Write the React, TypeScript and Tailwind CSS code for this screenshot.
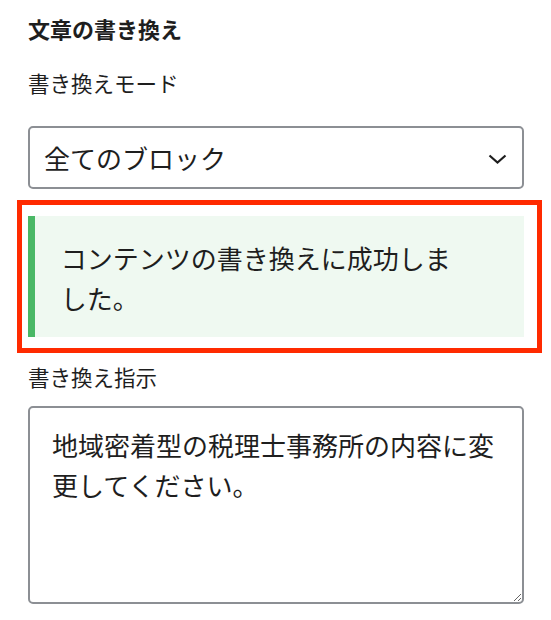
import React from "react";

export default function App() {
  const font = { fontFamily: '"Noto Sans CJK JP", "Noto Sans", sans-serif' };
  return (
    <div className="w-[551px] h-[620px] bg-white text-[#1e1e1e] overflow-hidden" style={font}>
      <div className="flex flex-col pl-[28px] pr-[27px]">
        <h2 className="mt-[13px] text-[22px] leading-[30px] font-bold">文章の書き換え</h2>
        <label className="mt-[25px] text-[21.5px] leading-[30px]">書き換えモード</label>
        <div className="relative mt-[28px]">
          <select
            className="appearance-none w-full h-[63px] border-2 border-[#8c8f94] rounded-[5px] bg-white pl-[14px] pr-[48px] text-[26px] leading-[40px] text-[#1e1e1e] outline-none"
            style={font}
            defaultValue="all"
          >
            <option value="all">全てのブロック</option>
            <option value="selected">選択中のブロック</option>
          </select>
          <svg
            className="absolute right-[17px] top-[28px] pointer-events-none"
            width="19"
            height="10"
            viewBox="0 0 19 10"
            fill="none"
          >
            <path d="M1.5 1.5 L9.5 8.5 L17.5 1.5" stroke="#1e1e1e" strokeWidth="2.2" />
          </svg>
        </div>
        <div className="relative mt-[27px]">
          <div className="flex bg-[#eff9f1] h-[121px]">
            <div className="w-[8px] bg-[#4ab866]" />
            <p className="pl-[26px] pr-[62px] pt-[22px] text-[26px] leading-[40px]">
              コンテンツの書き換えに成功しました。
            </p>
          </div>
          <div className="absolute left-[-11px] right-[-18px] top-[-16px] bottom-[-16px] border-[5px] border-[#ff2a00] pointer-events-none" />
        </div>
        <label className="mt-[25px] text-[21.5px] leading-[30px]">書き換え指示</label>
        <textarea
          className="mt-[14px] w-full h-[198px] border-2 border-[#8c8f94] rounded-[5px] pl-[22px] pr-[22px] pt-[17px] text-[26px] leading-[40px] text-[#1e1e1e] outline-none"
          style={font}
          defaultValue="地域密着型の税理士事務所の内容に変更してください。"
        />
      </div>
    </div>
  );
}
